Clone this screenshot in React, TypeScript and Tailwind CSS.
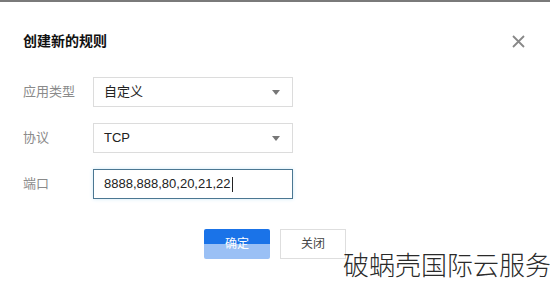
import React from "react";

const font = { fontFamily: '"Liberation Sans", "Noto Sans CJK SC", sans-serif' };

function Caret() {
  return (
    <svg width="8" height="5" viewBox="0 0 8 5" className="shrink-0">
      <path d="M0 0 L8 0 L4 5 Z" fill="#777" />
    </svg>
  );
}

function SelectBox({ value }: { value: string }) {
  return (
    <div className="w-[200px] h-[30px] border border-[#dcdcdc] bg-white flex items-center justify-between pl-[10px] pr-[12px]">
      <span className="text-[13px] text-[#222]">{value}</span>
      <Caret />
    </div>
  );
}

function Row({ label, children }: { label: string; children: React.ReactNode }) {
  return (
    <div className="flex items-center">
      <span className="w-[70px] text-[13px] text-[#8a8a8a]">{label}</span>
      {children}
    </div>
  );
}

export default function App() {
  return (
    <div className="relative w-[550px] h-[283px] bg-white overflow-hidden border-t-2 border-[#7a7a7a]" style={font}>
      <div className="flex items-center justify-between pl-[23px] pr-[25px] pt-[29px]">
        <span className="text-[14px] font-bold text-[#111]">创建新的规则</span>
        <svg width="13" height="13" viewBox="0 0 13 13">
          <path d="M1 1 L12 12 M12 1 L1 12" stroke="#888" strokeWidth="1.8" />
        </svg>
      </div>

      <div className="flex flex-col gap-[16px] pl-[23px] pt-[25px]">
        <Row label="应用类型">
          <SelectBox value="自定义" />
        </Row>
        <Row label="协议">
          <SelectBox value="TCP" />
        </Row>
        <Row label="端口">
          <div className="w-[200px] h-[30px] border border-[#4b7792] bg-white flex items-center pl-[10px] shadow-[0_0_4px_#cfe9f7]">
            <span className="text-[13px] text-[#222]">8888,888,80,20,21,22</span>
            <span className="w-px h-[15px] bg-[#222] ml-px" />
          </div>
        </Row>
      </div>

      <div className="flex gap-[10px] pl-[204px] pt-[30px]">
        <button className="w-[66px] h-[30px] rounded-[2px] text-[12px] text-white bg-[linear-gradient(#1a73e8_50%,#9ac0f5_50%)]">
          确定
        </button>
        <button className="w-[66px] h-[30px] border border-[#dedede] bg-white text-[12px] text-[#444]">
          关闭
        </button>
      </div>

      <span className="absolute left-[343px] top-[248px] text-[26px] leading-[32px] text-[#2a2a2a] font-light whitespace-nowrap">
        破蜗壳国际云服务
      </span>
    </div>
  );
}
